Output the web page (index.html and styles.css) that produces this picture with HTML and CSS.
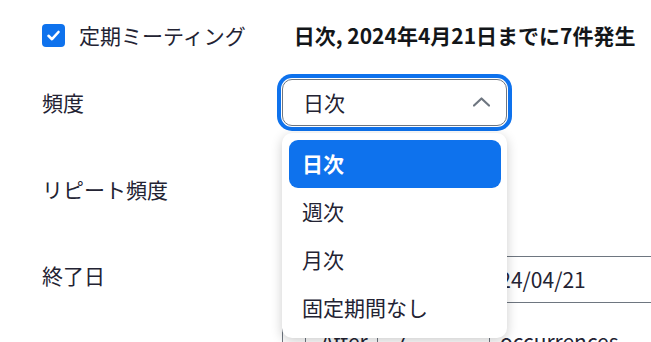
FILE: index.html
```html
<!DOCTYPE html>
<html lang="ja">

<head>
    <meta charset="UTF-8">
    <meta name="viewport" content="width=device-width, initial-scale=1.0">
    <title>定期ミーティング</title>
    <link rel="stylesheet" href="styles.css">
</head>

<body>
    <div class="form">
        <div class="row row-recurring">
            <label class="check">
                <span class="check-box">
                    <svg width="23" height="23" viewBox="0 0 23 23">
                        <polyline points="6.5,11.8 10,15.2 16.5,8" fill="none" stroke="#fff" stroke-width="2.6" stroke-linecap="round" stroke-linejoin="round" />
                    </svg>
                </span>
                定期ミーティング
            </label>
            <span class="summary">日次, 2024年4月21日までに7件発生</span>
        </div>

        <div class="row row-freq">
            <div class="label">頻度</div>
            <div class="field">
                <div class="select focused">
                    <span>日次</span>
                    <svg class="chevron" width="17" height="10" viewBox="0 0 17 10">
                        <polyline points="1,8.5 8.5,1.5 16,8.5" fill="none" stroke="#6e7680" stroke-width="2.2" stroke-linecap="round" stroke-linejoin="round" />
                    </svg>
                </div>
                <ul class="menu">
                    <li class="selected">日次</li>
                    <li>週次</li>
                    <li>月次</li>
                    <li>固定期間なし</li>
                </ul>
            </div>
        </div>

        <div class="row row-repeat">
            <div class="label">リピート頻度</div>
            <div class="field">
                <div class="select small"></div>
            </div>
        </div>

        <div class="row row-end">
            <div class="label">終了日</div>
            <div class="field">
                <div class="date-input">2024/04/21</div>
            </div>
        </div>

        <div class="row row-after">
            <div class="label"></div>
            <div class="field">
                <div class="stepper">
                    <span class="step-btn"></span>
                    <span class="step-text">After</span>
                    <span class="step-value">7</span>
                </div>
                <span class="unit-text">occurrences</span>
            </div>
        </div>
    </div>
</body>

</html>
```

FILE: styles.css
```css
html, body {
    overflow: hidden;
}

body {
    margin: 0;
    background-color: #fff;
    color: #232333;
    font-family: 'Noto Sans CJK JP', 'Noto Sans', sans-serif;
    font-size: 21px;
    line-height: 1.4;
}

.form {
    padding: 12px 0 0 42px;
}

.row {
    display: flex;
    align-items: center;
}

.label {
    width: 240px;
    flex-shrink: 0;
}

.field {
    position: relative;
    display: flex;
    align-items: center;
}

/* recurring checkbox row */
.row-recurring {
    height: 48px;
}

.check {
    display: flex;
    align-items: center;
    gap: 14px;
}

.check-box {
    width: 23px;
    height: 23px;
    border-radius: 4px;
    background-color: #0e72ed;
    display: flex;
}

.summary {
    margin-left: 48px;
    font-weight: bold;
    color: #131619;
}

/* frequency select */
.row-freq {
    margin-top: 19px;
}

.select {
    box-sizing: border-box;
    width: 225px;
    height: 47px;
    border: 1px solid #6e7680;
    border-radius: 10px;
    padding: 0 16px 0 20px;
    display: flex;
    align-items: center;
    justify-content: space-between;
    background-color: #fff;
}

.select.focused {
    box-shadow: 0 0 0 1px #fff, 0 0 0 5px #0e72ed;
}

.select.small {
    width: 120px;
}

.chevron {
    margin-top: -2px;
}

.menu {
    position: absolute;
    top: 54px;
    left: 0;
    z-index: 10;
    box-sizing: border-box;
    width: 225px;
    margin: 0;
    padding: 7px 6px 6px 7px;
    list-style: none;
    background-color: #fff;
    border-radius: 10px;
    box-shadow: 0 3px 12px rgba(0, 0, 0, 0.2);
}

.menu li {
    height: 48px;
    padding-left: 13px;
    display: flex;
    align-items: center;
    border-radius: 9px;
}

.menu li.selected {
    background-color: #0e72ed;
    color: #fff;
    font-weight: bold;
}

/* repeat every */
.row-repeat {
    margin-top: 40px;
    height: 47px;
}

/* end date */
.row-end {
    margin-top: 43px;
}

.row-end .label {
    margin-top: -7px;
}

.date-input {
    box-sizing: border-box;
    width: 320px;
    height: 47px;
    margin-left: 176px;
    padding-left: 17px;
    border: 1px solid #6e7680;
    border-radius: 10px;
    display: flex;
    align-items: center;
}

/* after n occurrences */
.row-after {
    margin-top: 15px;
}

.stepper {
    box-sizing: border-box;
    width: 208px;
    height: 47px;
    border: 1px solid #6e7680;
    border-radius: 10px;
    display: flex;
    align-items: center;
}

.step-btn {
    width: 22px;
    height: 100%;
    border-right: 1px solid #6e7680;
}

.step-text {
    width: 56px;
    padding-left: 15px;
    height: 100%;
    display: flex;
    align-items: center;
    border-right: 1px solid #6e7680;
}

.step-value {
    padding-left: 18px;
}

.unit-text {
    margin-left: 10px;
}
```
